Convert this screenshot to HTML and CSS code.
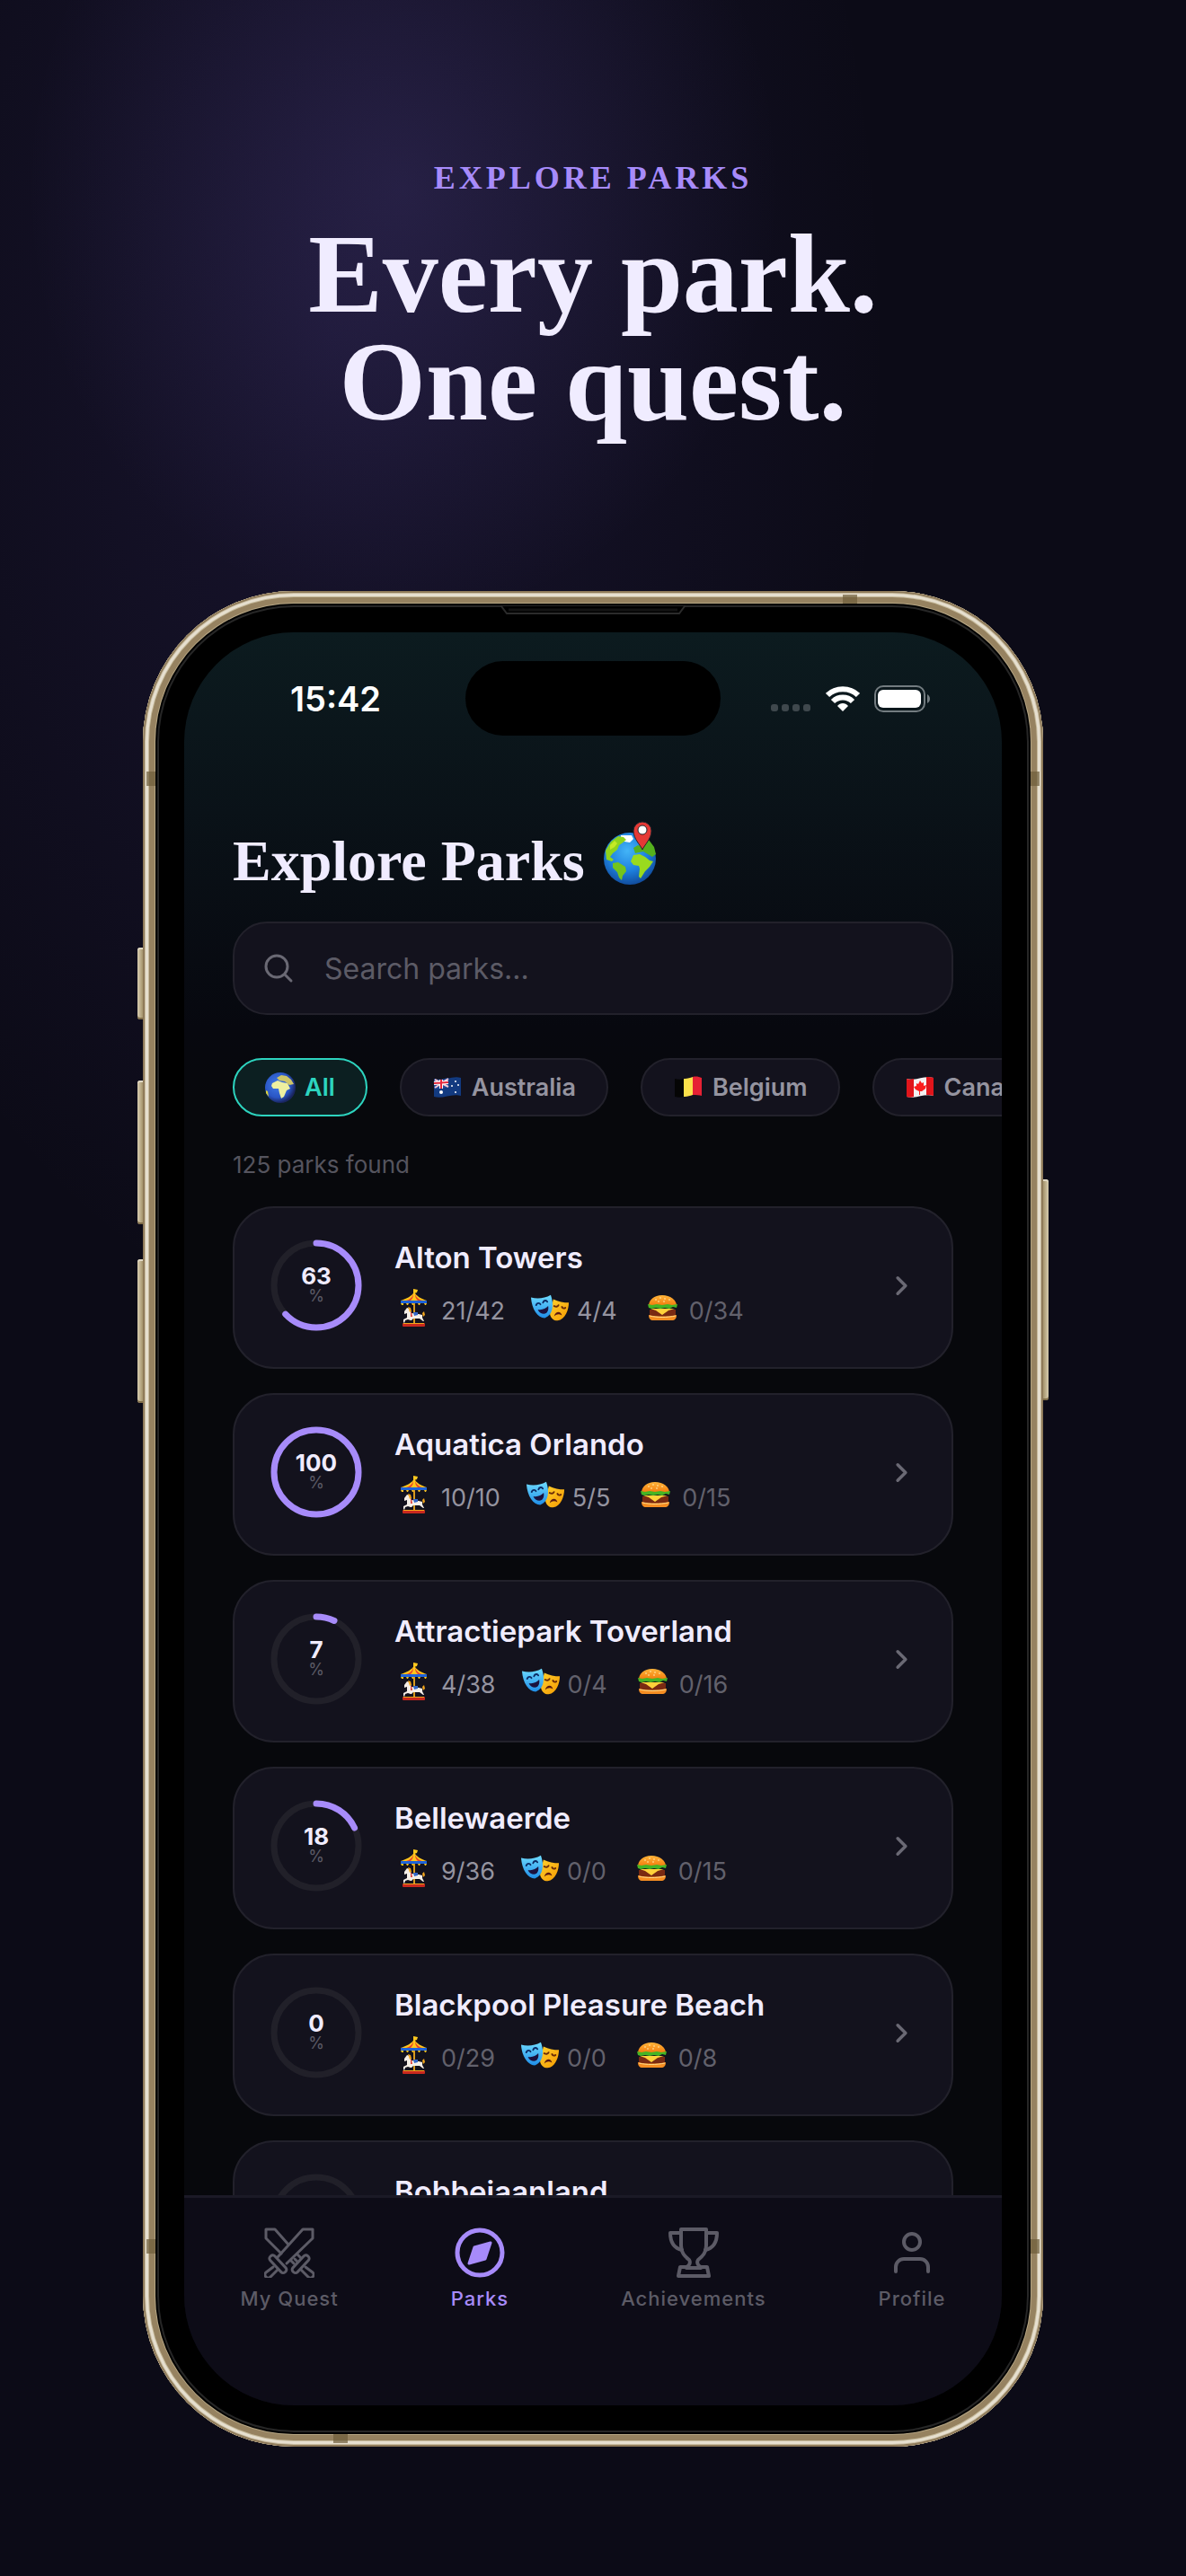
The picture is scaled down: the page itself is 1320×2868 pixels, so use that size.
FILE: index.html
```html
<!DOCTYPE html>
<html lang="en">
<head>
  <meta charset="UTF-8" />
  <meta name="viewport" content="width=device-width, initial-scale=1.0"/>
  <title>Explore Parks</title>
  <link rel="stylesheet" href="styles.css">
</head>
<body>
  <!-- Shared icons -->
  <svg class="sprite" aria-hidden="true">
    <defs>
      <linearGradient id="maskBlue" x1="0" y1="0" x2="0" y2="1"><stop offset="0" stop-color="#6fdcff"/><stop offset="1" stop-color="#1f8ee8"/></linearGradient>
      <linearGradient id="maskGold" x1="0" y1="0" x2="1" y2="1"><stop offset="0" stop-color="#ffd02e"/><stop offset="1" stop-color="#f59a00"/></linearGradient>
      <linearGradient id="bun" x1="0" y1="0" x2="0" y2="1"><stop offset="0" stop-color="#ffb53a"/><stop offset="1" stop-color="#f27a0c"/></linearGradient>
      <radialGradient id="sea" cx="0.45" cy="0.35" r="0.65"><stop offset="0" stop-color="#43b4f7"/><stop offset="0.6" stop-color="#1d7fdc"/><stop offset="1" stop-color="#114d9e"/></radialGradient>
      <radialGradient id="night" cx="0.4" cy="0.4" r="0.6"><stop offset="0" stop-color="#3f7be8"/><stop offset="0.7" stop-color="#2a55c4"/><stop offset="1" stop-color="#1a2560"/></radialGradient>
    </defs>
    <symbol id="carousel" viewBox="0 0 44 44">
      <path d="M21 6V1l5 1-1 3-3 1" fill="#ffc91f"/>
      <path d="M22 4C24 9 30 12 36 14H7C13 12 20 9 22 4z" fill="#ffc51c"/>
      <path d="M21 7c-1 3-4 6-8 7h5c2-2 3-4 3-7zM23 7c1 3 4 6 8 7h-5c-2-2-3-4-3-7z" fill="#e8432c"/>
      <path d="M7 14h29v3H7z" fill="#1f63d8"/>
      <path d="M7 17h3v2H8zM13 17h3l-1 2h-1zM19 17h3l-1 2h-1zM26 17h3l-1 2h-1zM33 17h3l-1 2h-1z" fill="#ffc51c"/>
      <path d="M21 17h2v23h-2z" fill="#d99a1f"/>
      <path d="M11 26l3-4 3 1 2 5 8 1 4 1v3l2 4h-1l-4-3-7 0-2 2-1 0-3-1-3 1-1 3-1-1v-3l4-2v-5l-3 1z" fill="#f6efe8"/>
      <path d="M15 21l3 1 1 4-2 1zM31 28l2-2 1 4-2 2z" fill="#f2a51c"/>
      <path d="M21 27h5v3l-4 1z" fill="#3266c8"/>
      <path d="M18 27l1 0 1 5-2 0z" fill="#de3f3a"/>
      <rect x="9" y="39" width="25" height="4" rx="1" fill="#c9281e"/>
      <path d="M10 39h23v1H10z" fill="#f2a51c"/>
    </symbol>
    <symbol id="masks" viewBox="0 0 46 44">
      <path d="M27 12c6 3 12 4 18 4 0 8-4 20-13 21-5 0-8-3-9-8z" fill="url(#maskGold)"/>
      <path d="M28 20c2 1 4 1 5-1M37 21c1 2 3 2 4 1" stroke="#6b2c08" stroke-width="2" fill="none" stroke-linecap="round"/>
      <path d="M28 32c1-6 8-7 9-1-3-2-6-2-9 1z" fill="#5b1a12"/>
      <path d="M1 10c8 2 16 1 23-3 4 11 3 23-7 27C9 34 2 24 1 10z" fill="url(#maskBlue)"/>
      <path d="M7 19c1-3 4-3 5-1M15 16c1-3 4-3 5-1" stroke="#0c2c66" stroke-width="2" fill="none" stroke-linecap="round"/>
      <path d="M9 24c5 1 9-1 12-4 1 5-1 9-5 9-3 0-6-2-7-5z" fill="#1a123e"/>
    </symbol>
    <symbol id="burger" viewBox="0 0 44 44">
      <path d="M7 20c0-7 6-12 15-12s16 5 16 12z" fill="url(#bun)"/>
      <path d="M14 13h2M19 11h2M24 12h2M29 13h2M17 15h2M23 15h2" stroke="#ffe9a8" stroke-width="1"/>
      <path d="M6 18l5 1 5-1 6 1 6-1 5 1 6-1-1 4-4-1-4 2-5-1-5 1-5-1-5 1-3-1z" fill="#46b524"/>
      <path d="M8 24h29v5c0 2-2 3-4 3H12c-3 0-4-1-4-3z" fill="#7a2a12"/>
      <path d="M9 23h27l-7 2-7 5-7-5z" fill="#ffd23a"/>
      <path d="M7 30c9 2 21 2 31 0 0 4-2 6-5 6H12c-3 0-5-2-5-6z" fill="#f58d22"/>
      <path d="M8 31c9 2 19 2 29 0" stroke="#ffdc8a" stroke-width="1" fill="none"/>
    </symbol>
    <symbol id="chevron" viewBox="0 0 24 24">
      <path d="M9 18l6-6-6-6" fill="none" stroke="currentColor" stroke-width="2.4" stroke-linecap="round" stroke-linejoin="round"/>
    </symbol>
  </svg>

  <header class="hero">
    <p class="eyebrow">EXPLORE PARKS</p>
    <h1>Every park.<br>One quest.</h1>
  </header>

  <div class="stage">
    <div class="phone">
      <span class="side-button action"></span>
      <span class="side-button volume-up"></span>
      <span class="side-button volume-down"></span>
      <span class="side-button power"></span>
      <span class="band left-top"></span>
      <span class="band left-bottom"></span>
      <span class="band right-top"></span>
      <span class="band right-bottom"></span>
      <span class="band top"></span>
      <span class="band bottom"></span>
      <svg class="speaker" viewBox="0 0 206 12" aria-hidden="true">
        <path d="M0 1H1L7 9H199L205 1H206" fill="#000" stroke="#2b2b2b" stroke-width="2"/>
        <path d="M9 5H197" stroke="#141414" stroke-width="3"/>
      </svg>

      <div class="screen">
        <div class="status-bar">
          <span class="time">15:42</span>
          <span class="island"></span>
          <div class="status-icons">
            <svg width="45" height="30" viewBox="0 0 45 30" fill="#3f484d" aria-hidden="true">
              <rect x="0" y="21" width="8" height="8" rx="3"/><rect x="12" y="21" width="8" height="8" rx="3"/><rect x="24" y="21" width="8" height="8" rx="3"/><rect x="36" y="21" width="8" height="8" rx="3"/>
            </svg>
            <svg width="38" height="30" viewBox="0 0 38 30" aria-hidden="true">
              <path d="M2 11C11 2 27 2 36 11" fill="none" stroke="#fff" stroke-width="6"/>
              <path d="M8 18c6-6 16-6 22 0" fill="none" stroke="#fff" stroke-width="6"/>
              <path d="M13 23c3-4 9-4 12 0l-6 6z" fill="#fff"/>
            </svg>
            <svg width="62" height="30" viewBox="0 0 62 30" aria-hidden="true">
              <rect x="1" y="1" width="55" height="28" rx="9" fill="none" stroke="#737c80" stroke-width="2"/>
              <rect x="4" y="5" width="48" height="20" rx="6" fill="#fff"/>
              <path d="M59 10c4 2 4 8 0 10z" fill="#737c80"/>
            </svg>
          </div>
        </div>

        <main class="content">
          <div class="title-row">
            <h2>Explore Parks</h2>
            <svg class="title-globe" viewBox="12 13 61 74" aria-hidden="true">
              <circle cx="42" cy="56" r="29" fill="url(#sea)"/>
              <path d="M32 30h12l2 4-4 4-6-1-4-4z" fill="#fff"/>
              <path d="M15 47l6-10 8-6 6 1 3 3-5 4-3 2-2 5-5 4-3 4 4 3-2 2-6-2z" fill="#8fd41d"/>
              <path d="M20 41l5-5 3 3-3 4-5 3z" fill="#c4ea25"/>
              <path d="M23 61l6-1 8 5 1 5-4 5-1 5-3-3-2-6-5-5z" fill="#74c41c"/>
              <path d="M46 52l7-1 6 3 5 4 4 1-4 6-5 5-5 8-2-2 1-9-1-3-6-1-3-4z" fill="#9ada1e"/>
              <path d="M46 44l5-3 6 2 6-8 6 8 2 8-4 3-5-3-5-3-5 1-4 1z" fill="#55b01d"/>
              <path d="M56 46c-2-5-10-12-10-21a10 10 0 0 1 20 0c0 9-8 16-10 21z" fill="#e53935" stroke="#23262c" stroke-width="1"/>
              <circle cx="56" cy="24" r="5" fill="#fff" stroke="#23262c" stroke-width="1"/>
            </svg>
          </div>

          <label class="search">
            <svg width="34" height="34" viewBox="0 0 34 34" aria-hidden="true">
              <circle cx="15" cy="15" r="12" fill="none" stroke="currentColor" stroke-width="3"/>
              <path d="M24 24l7 7" stroke="currentColor" stroke-width="3" stroke-linecap="round"/>
            </svg>
            <input type="text" placeholder="Search parks..." aria-label="Search parks">
          </label>

          <div class="chips">
            <button class="chip active">
              <svg class="chip-icon" viewBox="0 0 34 34" aria-hidden="true">
                <circle cx="17" cy="17" r="17" fill="url(#night)"/>
                <path d="M8 12l6-3 5 2 6 1 3 6-4 2-3 7-3 2-2-6-1-5-6 0-2-3z" fill="#eef0a0"/>
                <path d="M13 6l5-3 6 1 5 4 3 5-5 1-5-4-6-1z" fill="#cfc668"/>
                <path d="M1 20l2 1 1 6-3-4z" fill="#d9d23c"/>
              </svg>
              All
            </button>
            <button class="chip">
              <svg class="chip-icon" viewBox="0 0 34 34" aria-hidden="true">
                <path d="M2 7c10 4 19-4 30-1v20c-11-3-20 4-30 1z" fill="#123a80"/>
                <path d="M2 7c6 2 11 0 16-1v10c-5 1-10 3-16 2z" fill="#244a9a"/>
                <path d="M3 8l15 8M3 17l15-10" stroke="#f5c9d2" stroke-width="2"/>
                <path d="M10 8v10M2 12l16-1" stroke="#fff" stroke-width="4"/>
                <path d="M10 8v10M2 12l16-1" stroke="#e5283c" stroke-width="2"/>
                <g fill="#fff"><circle cx="10" cy="22" r="2"/><circle cx="26" cy="10" r="1"/><circle cx="22" cy="15" r="1"/><circle cx="29" cy="14" r="1"/><circle cx="26" cy="22" r="1"/></g>
              </svg>
              Australia
            </button>
            <button class="chip">
              <svg class="chip-icon" viewBox="0 0 34 34" aria-hidden="true">
                <path d="M2 7c4 1 7 1 10 0v20c-3 1-6 1-10 0z" fill="#050505"/>
                <path d="M12 7c4 0 7-1 10-2v20c-3 1-6 2-10 2z" fill="#fbe04a"/>
                <path d="M22 5c4-1 7 0 10 1v20c-3-1-6-1-10-1z" fill="#e62134"/>
              </svg>
              Belgium
            </button>
            <button class="chip">
              <svg class="chip-icon" viewBox="0 0 34 34" aria-hidden="true">
                <path d="M2 7c10 3 19-4 30-1v20c-11-3-20 4-30 1z" fill="#f4f1f2"/>
                <path d="M2 7c3 1 5 1 8 0v20c-3 1-5 1-8 0zM24 5c3 0 5 0 8 1v20c-3-1-5-1-8-1z" fill="#e0151b"/>
                <path d="M17 9l2 3 2-1v4l3-1-1 4-4 3h-2v4h-1v-4l-4-2-2-3 3-1v-3l2 1z" fill="#fb1e1e"/>
              </svg>
              Canada
            </button>
          </div>

          <p class="count">125 parks found</p>

          <ul class="park-list">
            <li>
              <a class="park-card" href="#">
                <div class="ring">
                  <svg viewBox="0 0 102 102"><circle class="track" cx="51" cy="51" r="47"/><circle class="value" cx="51" cy="51" r="47" pathLength="100" stroke-dasharray="63 100"/></svg>
                  <div class="ring-label"><b>63</b><span>%</span></div>
                </div>
                <div class="park-info">
                  <h3>Alton Towers</h3>
                  <div class="stats">
                    <span class="stat"><svg><use href="#carousel"/></svg>21/42</span>
                    <span class="stat"><svg><use href="#masks"/></svg>4/4</span>
                    <span class="stat none"><svg><use href="#burger"/></svg>0/34</span>
                  </div>
                </div>
                <svg class="chevron"><use href="#chevron"/></svg>
              </a>
            </li>
            <li>
              <a class="park-card" href="#">
                <div class="ring">
                  <svg viewBox="0 0 102 102"><circle class="value" cx="51" cy="51" r="47"/></svg>
                  <div class="ring-label"><b>100</b><span>%</span></div>
                </div>
                <div class="park-info">
                  <h3>Aquatica Orlando</h3>
                  <div class="stats">
                    <span class="stat"><svg><use href="#carousel"/></svg>10/10</span>
                    <span class="stat"><svg><use href="#masks"/></svg>5/5</span>
                    <span class="stat none"><svg><use href="#burger"/></svg>0/15</span>
                  </div>
                </div>
                <svg class="chevron"><use href="#chevron"/></svg>
              </a>
            </li>
            <li>
              <a class="park-card" href="#">
                <div class="ring">
                  <svg viewBox="0 0 102 102"><circle class="track" cx="51" cy="51" r="47"/><circle class="value" cx="51" cy="51" r="47" pathLength="100" stroke-dasharray="7 100"/></svg>
                  <div class="ring-label"><b>7</b><span>%</span></div>
                </div>
                <div class="park-info">
                  <h3>Attractiepark Toverland</h3>
                  <div class="stats">
                    <span class="stat"><svg><use href="#carousel"/></svg>4/38</span>
                    <span class="stat none"><svg><use href="#masks"/></svg>0/4</span>
                    <span class="stat none"><svg><use href="#burger"/></svg>0/16</span>
                  </div>
                </div>
                <svg class="chevron"><use href="#chevron"/></svg>
              </a>
            </li>
            <li>
              <a class="park-card" href="#">
                <div class="ring">
                  <svg viewBox="0 0 102 102"><circle class="track" cx="51" cy="51" r="47"/><circle class="value" cx="51" cy="51" r="47" pathLength="100" stroke-dasharray="18 100"/></svg>
                  <div class="ring-label"><b>18</b><span>%</span></div>
                </div>
                <div class="park-info">
                  <h3>Bellewaerde</h3>
                  <div class="stats">
                    <span class="stat"><svg><use href="#carousel"/></svg>9/36</span>
                    <span class="stat none"><svg><use href="#masks"/></svg>0/0</span>
                    <span class="stat none"><svg><use href="#burger"/></svg>0/15</span>
                  </div>
                </div>
                <svg class="chevron"><use href="#chevron"/></svg>
              </a>
            </li>
            <li>
              <a class="park-card" href="#">
                <div class="ring">
                  <svg viewBox="0 0 102 102"><circle class="track" cx="51" cy="51" r="47"/></svg>
                  <div class="ring-label"><b>0</b><span>%</span></div>
                </div>
                <div class="park-info">
                  <h3>Blackpool Pleasure Beach</h3>
                  <div class="stats">
                    <span class="stat none"><svg><use href="#carousel"/></svg>0/29</span>
                    <span class="stat none"><svg><use href="#masks"/></svg>0/0</span>
                    <span class="stat none"><svg><use href="#burger"/></svg>0/8</span>
                  </div>
                </div>
                <svg class="chevron"><use href="#chevron"/></svg>
              </a>
            </li>
            <li>
              <a class="park-card" href="#">
                <div class="ring">
                  <svg viewBox="0 0 102 102"><circle class="track" cx="51" cy="51" r="47"/></svg>
                </div>
                <div class="park-info">
                  <h3>Bobbejaanland</h3>
                </div>
              </a>
            </li>
          </ul>
        </main>

        <nav class="tab-bar">
          <a class="tab" href="#">
            <svg viewBox="0 0 56 56" stroke-width="3">
              <path d="M15 33L43 2H54V12L25 40"/>
              <path d="M27 19L12 2H2V12L19 29M37 30l4 4M30 37l3 3M34 35l3 3"/>
              <rect x="-12" y="-4" width="24" height="7" rx="3" transform="translate(15 41) rotate(47)"/>
              <rect x="-12" y="-4" width="24" height="7" rx="3" transform="translate(41 41) rotate(-47)"/>
              <path d="M10 44l-8 6a3 3 0 0 0 5 5l8-8M46 44l8 6a3 3 0 0 1-5 5l-8-8"/>
            </svg>
            My Quest
          </a>
          <a class="tab current" href="#">
            <svg viewBox="0 0 56 56" stroke-width="5">
              <circle cx="28" cy="28" r="25"/>
              <path d="M22 22l18-5-6 18-18 5z" fill="currentColor" stroke-width="3"/>
            </svg>
            Parks
          </a>
          <a class="tab" href="#">
            <svg viewBox="0 0 56 56" stroke-width="4">
              <path d="M14 2H42V20C42 28 38 32 33 36C31 39 33 43 36 44H43L45 54H11L13 44H20C23 43 25 39 23 36C18 32 14 28 14 20Z"/>
              <path d="M14 6H2C2 17 6 23 15 25M42 6H54C54 17 50 23 41 25M20 45H36"/>
            </svg>
            Achievements
          </a>
          <a class="tab" href="#">
            <svg viewBox="0 0 56 56" stroke-width="4">
              <circle cx="28" cy="16" r="9"/>
              <path d="M10 49v-5a9 9 0 0 1 9-9h18a9 9 0 0 1 9 9v5"/>
            </svg>
            Profile
          </a>
        </nav>
      </div>
    </div>
  </div>
</body>
</html>
```

FILE: styles.css
```css
* {
  margin: 0;
  padding: 0;
  box-sizing: border-box;
}

body {
  min-height: 100vh;
  font-family: Inter, "Liberation Sans", sans-serif;
  color: #f0ecff;
  background:
    radial-gradient(ellipse 420px 480px at 34% 210px, rgba(139, 116, 235, 0.14), transparent),
    radial-gradient(ellipse 620px 1100px at 28% 380px, rgba(120, 90, 230, 0.11), transparent),
    #0c0b17;
}

a {
  color: inherit;
  text-decoration: none;
}

.sprite {
  position: absolute;
  width: 0;
  height: 0;
}

/* Headline */
.hero {
  padding: 174px 40px 172px;
  text-align: center;
  font-family: "Liberation Serif", serif;
  font-weight: 700;
}

.eyebrow {
  color: #a78bfa;
  font-size: 36px;
  line-height: 48px;
  letter-spacing: 4px;
  margin-bottom: 24px;
}

.hero h1 {
  font-size: 124px;
  line-height: 120px;
}

/* Phone */
.stage {
  padding: 0 159px 144px;
}

.phone {
  position: relative;
  aspect-ratio: 1002 / 2066;
  padding: 46px;
  border-radius: 168px;
  background: #000;
  box-shadow:
    inset 0 0 0 2px #8f7b5a,
    inset 0 0 0 3px #c9bda2,
    inset 0 0 0 6px #e6dfcf,
    inset 0 0 0 7px #c4b899,
    inset 0 0 0 13px #968260,
    inset 0 0 0 14px #b5a583,
    inset 0 0 0 16px #000,
    inset 0 0 0 18px #262626;
}

.side-button {
  position: absolute;
  left: -6px;
  width: 6px;
  border-radius: 3px 0 0 3px;
  background: linear-gradient(90deg, #d8cdb0, #a5946c);
  box-shadow: inset 0 2px #e0d8c4, inset 0 -2px #7f6c48;
}

.action {
  top: 397px;
  height: 80px;
}

.volume-up {
  top: 545px;
  height: 160px;
}

.volume-down {
  top: 744px;
  height: 160px;
}

.power {
  left: auto;
  right: -6px;
  top: 655px;
  height: 246px;
  border-radius: 0 3px 3px 0;
  background: linear-gradient(270deg, #d8cdb0, #a5946c);
}

.band {
  position: absolute;
  width: 10px;
  height: 16px;
  background: rgba(110, 92, 58, 0.7);
}

.left-top,
.left-bottom {
  left: 4px;
}

.right-top,
.right-bottom {
  right: 4px;
}

.left-top,
.right-top {
  top: 201px;
}

.left-bottom,
.right-bottom {
  bottom: 215px;
}

.top,
.bottom {
  width: 16px;
  height: 10px;
}

.top {
  top: 4px;
  right: 207px;
}

.bottom {
  bottom: 4px;
  left: 212px;
}

.speaker {
  position: absolute;
  top: 16px;
  left: 50%;
  width: 206px;
  height: 12px;
  transform: translateX(-50%);
}

.screen {
  height: 100%;
  display: flex;
  flex-direction: column;
  overflow: hidden;
  border-radius: 122px;
  background: linear-gradient(#0c1b1f, #0a1218 200px, #07080f 440px, #07080c 520px);
}

/* Status bar */
.status-bar {
  flex-shrink: 0;
  display: grid;
  grid-template-columns: 1fr 284px 1fr;
  align-items: center;
  padding-top: 32px;
}

.time {
  justify-self: end;
  padding-right: 94px;
  font-size: 38px;
  font-weight: 600;
  color: #fff;
}

.island {
  height: 83px;
  border-radius: 42px;
  background: #000;
}

.status-icons {
  display: flex;
  gap: 16px;
  padding-left: 56px;
}

/* Content */
.content {
  flex: 1;
  min-height: 0;
  overflow: hidden;
  padding: 94px 54px 0;
}

.title-row {
  display: flex;
  align-items: flex-start;
  gap: 20px;
}

.title-row h2 {
  font-family: "Liberation Serif", serif;
  font-size: 64px;
  line-height: 92px;
}

.title-globe {
  width: 61px;
  height: 74px;
}

.search {
  display: flex;
  align-items: center;
  gap: 34px;
  height: 104px;
  margin-top: 21px;
  padding: 0 32px;
  border: 2px solid #22212b;
  border-radius: 38px;
  background: #13121d;
  color: #6a6974;
}

.search input {
  flex: 1;
  border: none;
  outline: none;
  background: none;
  font-family: inherit;
  font-size: 32px;
  color: #f0ecff;
}

.search input::placeholder {
  color: #5c5b66;
}

.chips {
  display: flex;
  gap: 36px;
  margin: 48px -54px 0 0;
  overflow: hidden;
}

.chip {
  flex-shrink: 0;
  display: flex;
  align-items: center;
  gap: 10px;
  height: 65px;
  padding: 0 34px;
  border: 2px solid #22212b;
  border-radius: 33px;
  background: #13121d;
  color: #9594a0;
  font-family: inherit;
  font-size: 27px;
  font-weight: 600;
  white-space: nowrap;
}

.chip.active {
  border-color: #2dd4bf;
  background: #0c1f21;
  color: #2dd4bf;
}

.chip-icon {
  width: 34px;
  height: 34px;
}

.count {
  margin: 36px 0 28px;
  font-size: 26px;
  line-height: 36px;
  color: #55545e;
}

/* Parks */
.park-list {
  list-style: none;
  display: flex;
  flex-direction: column;
  gap: 27px;
}

.park-card {
  display: flex;
  gap: 36px;
  padding: 35px 38px 40px 40px;
  border: 2px solid #22212b;
  border-radius: 46px;
  background: #13121d;
}

.ring {
  display: grid;
  width: 102px;
  height: 102px;
}

.ring > * {
  grid-area: 1 / 1;
}

.ring svg {
  transform: rotate(-90deg);
}

.ring circle {
  fill: none;
  stroke: #212029;
  stroke-width: 7;
}

.ring .value {
  stroke: #a78bfa;
  stroke-linecap: round;
}

.ring-label {
  display: flex;
  flex-direction: column;
  align-items: center;
  justify-content: center;
  font-size: 26px;
  line-height: 24px;
}

.ring-label span {
  font-size: 18px;
  line-height: 20px;
  color: #5c5b66;
}

.park-info {
  flex: 1;
}

.park-info h3 {
  font-size: 33px;
  line-height: 40px;
  font-weight: 600;
}

.stats {
  display: flex;
  gap: 28px;
  margin-top: 14px;
}

.stat {
  display: flex;
  align-items: flex-end;
  gap: 8px;
  font-size: 27px;
  line-height: 36px;
  color: #9594a0;
}

.stat svg {
  width: 44px;
  height: 44px;
}

.stat.none {
  color: #62616c;
}

.chevron {
  align-self: center;
  width: 35px;
  height: 35px;
  color: #6a6974;
}

/* Tab bar */
.tab-bar {
  flex-shrink: 0;
  display: flex;
  justify-content: space-around;
  padding: 33px 0 105px;
  border-top: 3px solid #1b1a26;
  background: #0d0c17;
}

.tab {
  display: flex;
  flex-direction: column;
  align-items: center;
  gap: 9px;
  font-size: 22px;
  line-height: 28px;
  font-weight: 500;
  letter-spacing: 1px;
  color: #5c5b66;
}

.tab svg {
  width: 56px;
  height: 56px;
  fill: none;
  stroke: currentColor;
  stroke-linecap: round;
  stroke-linejoin: round;
}

.tab.current {
  color: #a78bfa;
}
```
